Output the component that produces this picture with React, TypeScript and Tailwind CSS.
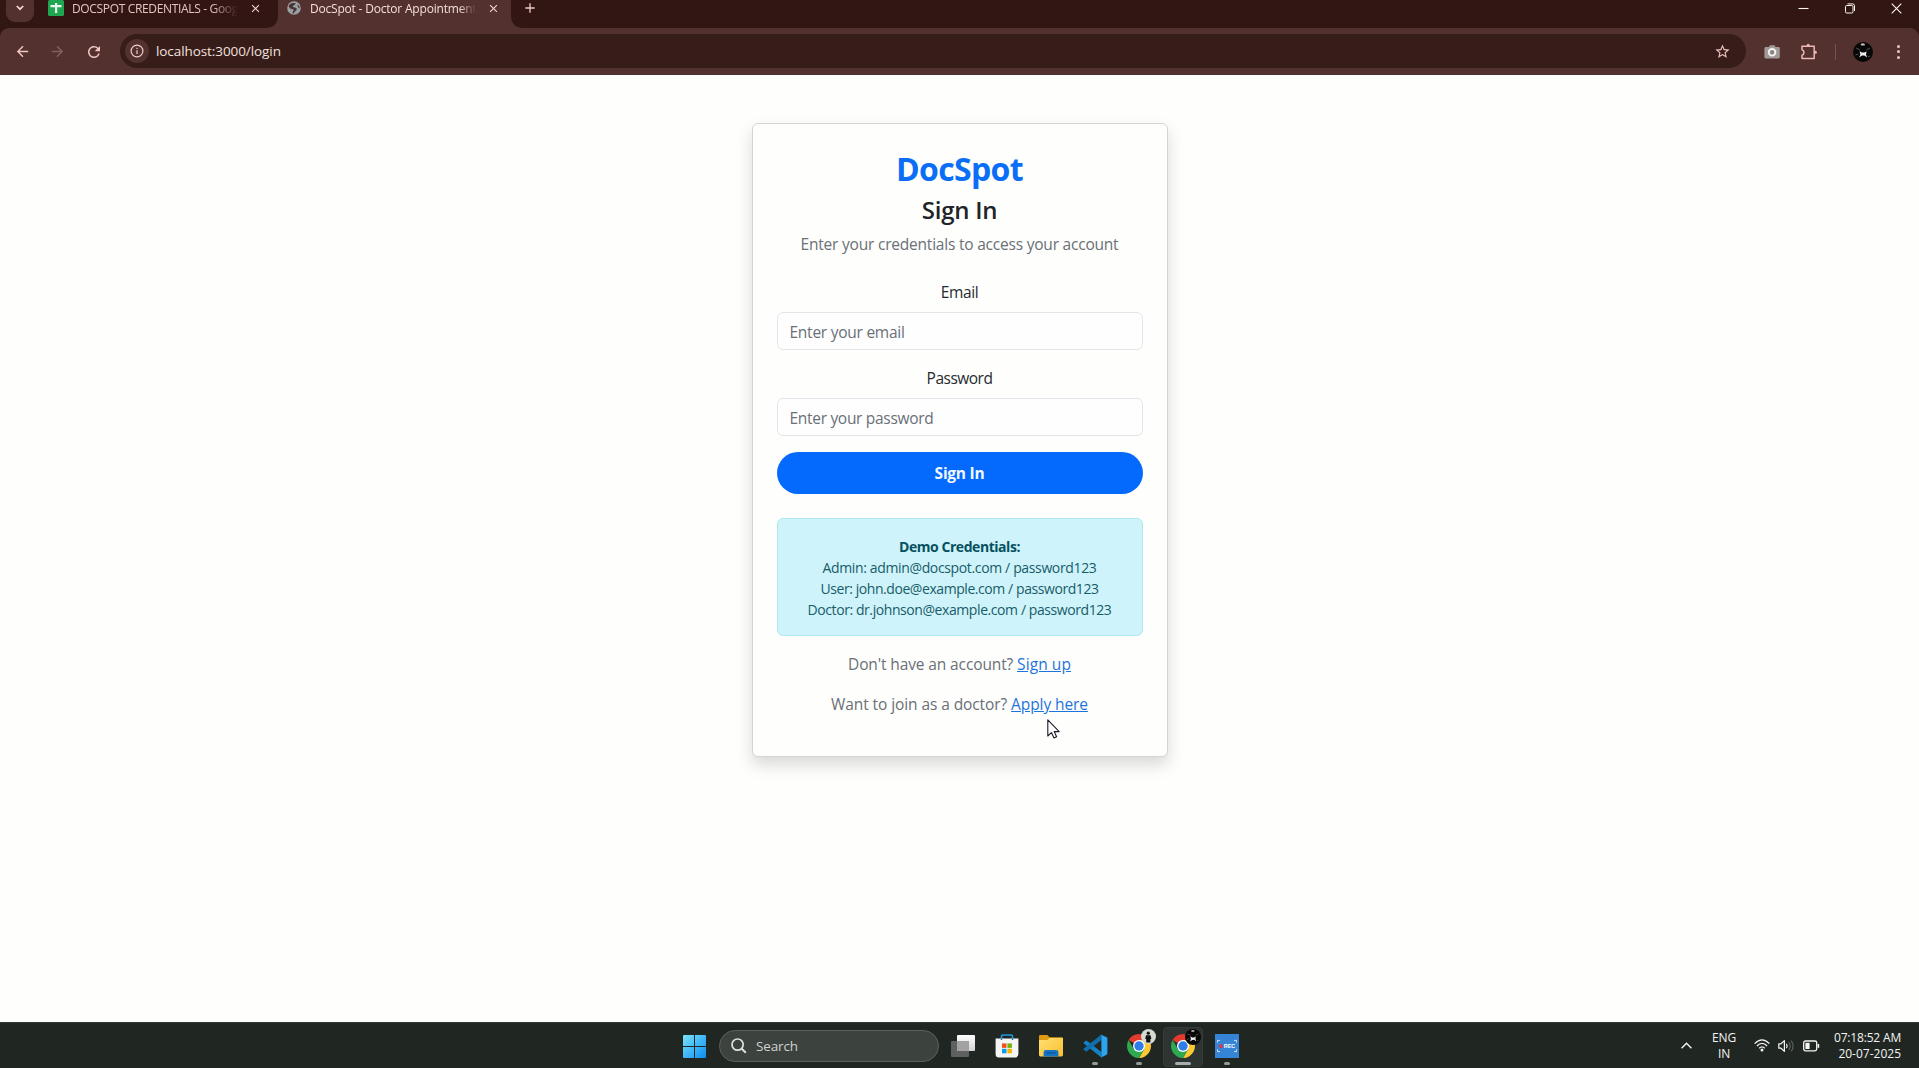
import React from "react";
import { MdArrowBack, MdArrowForward, MdRefresh, MdStarBorder, MdClose, MdAdd } from "react-icons/md";

function SheetsIcon() {
  return (
    <svg width="16" height="16" viewBox="0 0 16 16" className="block shrink-0">
      <rect width="16" height="16" rx="1.5" fill="#20a552" />
      <path d="M7 3h2.2v10H7z M2.5 5h11v2.2h-11z" fill="#e9f5ec" />
    </svg>
  );
}

function GlobeIcon() {
  return (
    <svg width="14" height="14" viewBox="0 0 14 14" className="block shrink-0">
      <circle cx="7" cy="7" r="6.8" fill="#9aa0a3" />
      <path d="M1.6 5.2C2 3.2 4.2 1.8 6.6 2L9.2 2.6L6.6 4.4L5.6 6L8.2 6.4L9.8 7.6L9.4 9.6L7.8 10.6L6.8 12.6L5.6 12.2L5.8 10.4L7 9L5 8L3 7.6z" fill="#4b3433" />
      <path d="M10.2 3.4L12.2 5.2L12.8 7.4L11.2 6.4z" fill="#4b3433" />
    </svg>
  );
}

function PuzzleIcon() {
  return (
    <svg width="18" height="18" viewBox="0 0 18 18" fill="none" stroke="#eab9b4" strokeWidth="1.5" strokeLinejoin="round" className="block">
      <path d="M2 3.2H14.2V15.6H2V12.2C4.6 11.6 4.6 7.4 2 6.8Z" />
      <circle cx="8.2" cy="2.3" r="1.5" fill="#eab9b4" stroke="none" />
      <circle cx="15.4" cy="9.3" r="1.5" fill="#eab9b4" stroke="none" />
    </svg>
  );
}

function CameraIcon() {
  return (
    <svg width="16" height="14" viewBox="0 0 16 14" className="block">
      <path d="M2 2h2.8L6 .2h4.4L11.6 2H14.6Q15.8 2 15.8 3.4V12Q15.8 13.4 14.6 13.4H1.6Q.4 13.4 .4 12V3.4Q.4 2 2 2z" fill="#a09a98" />
      <circle cx="8.1" cy="7.3" r="3.3" fill="#8b8584" stroke="#f7f5f4" strokeWidth="1.9" />
    </svg>
  );
}

function Avatar({ size }: { size: number }) {
  return (
    <svg width={size} height={size} viewBox="0 0 20 20" className="block">
      <circle cx="10" cy="10" r="10" fill="#070707" />
      <path d="M7.6 2.2Q9.6 .2 12 2.2L11.6 3.4H8.2z" fill="#c9b9b9" />
      <path d="M3 6l4 2 M17 6l-3.6 2 M2.5 13l3-1 M15 15l2-1" stroke="#474747" strokeWidth="1.2" />
      <path d="M6.6 9.2L8.8 10.6L11.4 10.6L13.6 9.4L13 12.2L14 15.4L11.4 13.4L9 13.6L6.2 15.6L7.4 12.4z" fill="#f0f0f0" />
    </svg>
  );
}

function ChromeLogo() {
  return (
    <svg width="24" height="24" viewBox="0 0 24 24" className="block">
      <path d="M12 12L1.61 6A12 12 0 0 1 22.39 6z" fill="#e33b2e" />
      <path d="M22.39 6A12 12 0 0 1 12 24L17.2 15L12 6z" fill="#fcc934" />
      <path d="M1.61 6A12 12 0 0 0 12 24L17.2 15L12 12L6.8 15z" fill="#2da94f" />
      <circle cx="12" cy="12" r="6" fill="#fff" />
      <circle cx="12" cy="12" r="4.7" fill="#2f7de9" />
    </svg>
  );
}

function StartLogo() {
  return (
    <svg width="23" height="23" viewBox="0 0 23 23" className="block">
      <defs>
        <linearGradient id="start" x1="0" y1="0" x2="23" y2="23" gradientUnits="userSpaceOnUse">
          <stop stopColor="#7be3fb" />
          <stop offset="1" stopColor="#0a8df2" />
        </linearGradient>
      </defs>
      <path d="M1 0H11V11H0V1Q0 0 1 0z M12 0H22Q23 0 23 1V11H12z M0 12H11V23H1Q0 23 0 22z M12 12H23V22Q23 23 22 23H12z" fill="url(#start)" />
    </svg>
  );
}

function TaskViewIcon() {
  return (
    <svg width="24" height="22" viewBox="0 0 24 22" className="block">
      <defs>
        <linearGradient id="tv" x1="0" y1="0" x2="0" y2="1">
          <stop stopColor="#ffffff" />
          <stop offset="1" stopColor="#d2d2d2" />
        </linearGradient>
      </defs>
      <rect x="6" y="0" width="18" height="16" rx="1" fill="url(#tv)" />
      <rect x="0" y="6" width="18" height="16" rx="1" fill="#5f6060" />
      <path d="M6 6h12v10H6z" fill="#a2a2a2" />
    </svg>
  );
}

function StoreIcon() {
  return (
    <svg width="24" height="24" viewBox="0 0 24 24" className="block">
      <path d="M6.5 6V2.2Q6.5 1 7.7 1H16.3Q17.5 1 17.5 2.2V6" fill="none" stroke="#1c9be0" strokeWidth="1.6" />
      <path d="M.6 4.6H23.4V20Q23.4 23.6 20 23.6H4Q.6 23.6 .6 20z" fill="#f5f5f5" />
      <path d="M6.5 4.6V6 M17.5 4.6V6" stroke="#136fa8" strokeWidth="1.4" />
      <path d="M7 9.4h4.5v4.5H7z" fill="#f25022" />
      <path d="M12.4 9.4h4.5v4.5h-4.5z" fill="#6fb50a" />
      <path d="M7 14.8h4.5v4.5H7z" fill="#0a9ce8" />
      <path d="M12.4 14.8h4.5v4.5h-4.5z" fill="#fbb500" />
    </svg>
  );
}

function FolderIcon() {
  return (
    <svg width="24" height="22" viewBox="0 0 24 22" className="block">
      <defs>
        <linearGradient id="fold" x1="0" y1="0" x2="1" y2="1">
          <stop stopColor="#ffdf74" />
          <stop offset="1" stopColor="#fbc02e" />
        </linearGradient>
      </defs>
      <path d="M0 1.2Q0 0 1.2 0H8.4L10.6 2.2H22.8Q24 2.2 24 3.4V12H0z" fill="#dd9a12" />
      <path d="M0 5H8.4L10.8 3H24V20Q24 21.4 22.6 21.4H1.4Q0 21.4 0 20z" fill="url(#fold)" />
      <path d="M4.6 21.6V17.2Q4.6 15 6.8 15H17.2Q19.4 15 19.4 17.2V21.6z" fill="#1674c4" />
      <path d="M7.4 18h9.2" stroke="#0d569c" strokeWidth="1.3" />
    </svg>
  );
}

function CodeIcon() {
  return (
    <svg width="25" height="24" viewBox="0 0 25 24" className="block">
      <path d="M.8 8.2L2.6 6.7Q3.2 6.3 3.8 6.8L18.4 18V23.4L.8 9.4Q.2 8.8 .8 8.2z" fill="#1580c2" />
      <path d="M.8 15.8L2.6 17.3Q3.2 17.7 3.8 17.2L18.4 6V.6L.8 14.6Q.2 15.2 .8 15.8z" fill="#0f6fae" />
      <path d="M17.6 .4L23.6 3.2Q24.4 3.6 24.4 4.6V19.4Q24.4 20.4 23.6 20.8L17.6 23.7Q18.4 23 18.4 22V2Q18.4 1 17.6 .4z" fill="#2ca5ee" />
    </svg>
  );
}

function RecIcon() {
  return (
    <svg width="24" height="24" viewBox="0 0 24 24" className="block">
      <rect width="24" height="24" fill="#3684d6" />
      <path d="M2.5 8.6V6.4H5 M19 6.4H21.5V8.6 M2.5 15.4V17.6H5 M19 17.6H21.5V15.4" fill="none" stroke="#cfe2f6" strokeWidth="1" />
      <circle cx="6" cy="12.2" r="2" fill="#dc3545" />
      <text x="8.8" y="14.2" fontFamily="Liberation Sans, sans-serif" fontWeight="700" fontSize="5.8" textLength="11.4" lengthAdjust="spacingAndGlyphs" fill="#ffffff">REC</text>
    </svg>
  );
}

function TabClose() {
  return <MdClose size={13} className="block shrink-0 text-[#f7d5d1]" />;
}

function TitleBar() {
  return (
    <div className="flex h-7 bg-[#321614]">
      <div className="ml-1.5 flex h-[22px] w-[28px] shrink-0 justify-center rounded-b-[9px] bg-[#52312e] pt-[5px]">
        <svg width="8" height="6" viewBox="0 0 8 6" fill="none" stroke="#f7d5d1" strokeWidth="1.7" className="block">
          <path d="M.8 1L4 4.2L7.2 1" />
        </svg>
      </div>
      <div className="ml-[14px] flex h-4 w-[217px] shrink-0 items-center">
        <SheetsIcon />
        <span className="ml-[8px] w-[166px] shrink-0 overflow-hidden whitespace-nowrap text-[12px] leading-[17px] tracking-[-0.34px] text-[#e3c3c0] [mask-image:linear-gradient(to_right,#000_84%,transparent)]">
          DOCSPOT CREDENTIALS - Goog
        </span>
        <span className="ml-[11px]"><TabClose /></span>
      </div>
      <svg width="14" height="28" viewBox="0 0 14 28" className="block shrink-0">
        <path d="M0 28Q13 28 13 15V0H14V28z" fill="#52312e" />
      </svg>
      <div className="flex h-7 w-[231px] shrink-0 items-start bg-[#52312e]">
        <div className="ml-[8px] flex h-4 items-center">
          <GlobeIcon />
          <span className="ml-[9px] w-[166px] shrink-0 overflow-hidden whitespace-nowrap text-[12px] leading-[17px] tracking-[-0.2px] text-[#f6dedb] [mask-image:linear-gradient(to_right,#000_90%,transparent)]">
            DocSpot - Doctor Appointment
          </span>
          <span className="ml-[11px]"><TabClose /></span>
        </div>
      </div>
      <svg width="14" height="28" viewBox="0 0 14 28" className="block shrink-0">
        <path d="M14 28Q1 28 1 15V0H0V28z" fill="#52312e" />
      </svg>
      <MdAdd size={16} className="ml-[-2px] block shrink-0 text-[#f0c8c4]" />
      <div className="ml-auto mr-[17px] flex h-4 items-center gap-[36px] text-[#fdf4f3]">
        <svg width="11" height="11" viewBox="0 0 11 11" className="block"><path d="M.5 5.5h10" stroke="currentColor" strokeWidth="1.1" /></svg>
        <svg width="10" height="11" viewBox="0 0 10 11" className="block" fill="none" stroke="currentColor" strokeWidth="1">
          <rect x=".5" y="2.5" width="7.5" height="7.5" rx="1.2" />
          <path d="M2.5 .9H7.6Q9.5 .9 9.5 2.8V8" />
        </svg>
        <svg width="11" height="11" viewBox="0 0 11 11" className="block"><path d="M.7 .7l9.6 9.6M10.3 .7L.7 10.3" stroke="currentColor" strokeWidth="1.1" /></svg>
      </div>
    </div>
  );
}

function AddressBar() {
  return (
    <div className="bg-[#321614]">
      <div className="flex h-[47px] items-center rounded-t-[9px] bg-[#52312e]">
        <MdArrowBack size={17} className="ml-[14px] block shrink-0 text-[#f2c6c1]" />
        <MdArrowForward size={17} className="ml-[18px] block shrink-0 text-[#85605d]" />
        <MdRefresh size={18} className="ml-[19px] block shrink-0 text-[#f2c6c1]" />
        <div className="mb-px ml-[17px] flex h-[34px] w-[1626px] shrink-0 items-center rounded-full bg-[#371d1a]">
          <div className="ml-[5px] flex h-[24px] w-[24px] shrink-0 items-center justify-center rounded-full bg-[#52312e]">
            <svg width="14" height="14" viewBox="0 0 14 14" className="block" fill="none" stroke="#f2cfcb" strokeWidth="1.2">
              <circle cx="7" cy="7" r="5.9" />
              <path d="M7 6.3V10M7 3.8V5.1" />
            </svg>
          </div>
          <span className="ml-[7px] text-[13.5px] leading-5 tracking-[-0.08px] text-[#f3e0de]">localhost:3000/login</span>
          <MdStarBorder size={17} className="ml-auto mr-[15px] block text-[#efc0bb]" />
        </div>
        <div className="ml-[18px]"><CameraIcon /></div>
        <div className="ml-[20px]"><PuzzleIcon /></div>
        <div className="ml-[17px] h-4 w-px bg-[#755350]" />
        <div className="ml-[17px]"><Avatar size={20} /></div>
        <div className="ml-[24px] flex flex-col gap-[2.5px]">
          <i className="block h-[3px] w-[3px] rounded-full bg-[#f0c3be]" />
          <i className="block h-[3px] w-[3px] rounded-full bg-[#f0c3be]" />
          <i className="block h-[3px] w-[3px] rounded-full bg-[#f0c3be]" />
        </div>
      </div>
    </div>
  );
}

function LoginCard() {
  return (
    <div className="relative mt-12 h-[634px] w-[416px] rounded-md border border-[#d4d4d4] bg-[#fefefc] px-6 pt-[24.6px] text-center shadow-[0_8px_16px_rgba(0,0,0,0.15)]">
      <h2 className="mb-2 text-[32px] font-bold leading-[39px] tracking-[-0.65px] text-[#0a6ef6]">DocSpot</h2>
      <h4 className="mb-2 text-[24px] font-semibold leading-[28.8px] tracking-[-0.24px] text-[#212529]">Sign In</h4>
      <p className="text-[15.5px] leading-6 tracking-[-0.21px] text-[#697077]">Enter your credentials to access your account</p>
      <form className="mt-6" onSubmit={(e) => e.preventDefault()}>
        <label htmlFor="email" className="mb-[7.5px] block text-[15.5px] leading-6 tracking-[-0.36px] text-[#262b30]">Email</label>
        <input id="email" type="email" placeholder="Enter your email" className="block h-[38px] w-full rounded-md border border-[#e3e6e9] bg-[#fefefe] px-3 pt-0.5 text-[15.5px] tracking-[-0.25px] outline-none placeholder:text-[#697077]" />
        <label htmlFor="password" className="mb-2 mt-4 block text-[15.5px] leading-6 tracking-[-0.5px] text-[#262b30]">Password</label>
        <input id="password" type="password" placeholder="Enter your password" className="block h-[38px] w-full rounded-md border border-[#e3e6e9] bg-[#fefefe] px-3 pt-0.5 text-[15.5px] tracking-[-0.3px] outline-none placeholder:text-[#697077]" />
        <button type="submit" className="mt-4 block h-[42px] w-full rounded-full bg-[#036afd] pt-px text-[15.5px] font-bold leading-6 tracking-[-0.25px] text-[#f1f7ff]">Sign In</button>
      </form>
      <div className="mt-6 h-[118.6px] rounded-md border border-[#b1e7ef] bg-[#cff3fa] pt-[17px] text-[14px] leading-[21px] text-[#175c69]">
        <p className="font-bold tracking-[-0.45px] text-[#055160]">Demo Credentials:</p>
        <p className="tracking-[-0.36px]">Admin: admin@docspot.com / password123</p>
        <p className="tracking-[-0.43px]">User: john.doe@example.com / password123</p>
        <p className="tracking-[-0.42px]">Doctor: dr.johnson@example.com / password123</p>
      </div>
      <p className="mt-4 text-[15.5px] leading-6 tracking-[-0.12px] text-[#697077]">
        Don't have an account? <a href="#" className="tracking-[0.08px] text-[#1f74db] underline">Sign up</a>
      </p>
      <p className="mt-4 text-[15.5px] leading-6 tracking-[-0.09px] text-[#697077]">
        Want to join as a doctor? <a href="#" className="text-[#1f74db] underline">Apply here</a>
      </p>
      <svg width="14" height="20" viewBox="0 0 14 20" className="absolute left-[294px] top-[595px]">
        <path d="M.8 .8V17L4.4 13.6L7 19L9.6 17.8L7.2 12.6H12.2z" fill="#fff" stroke="#1c1c28" strokeWidth="1.1" strokeLinejoin="round" />
      </svg>
    </div>
  );
}

function Task({ children, mark = "" }: { children: React.ReactNode; mark?: "" | "dot" | "active" }) {
  return (
    <div className="relative flex h-full w-11 shrink-0 items-center justify-center">
      {mark === "active" && <div className="absolute left-[2px] top-[4px] h-[40px] w-[40px] rounded-[4px] border border-[#353b38] bg-[#2e3431]" />}
      <div className="relative">{children}</div>
      {mark === "dot" && <div className="absolute bottom-[3px] left-[19px] h-[3px] w-[6px] rounded-full bg-[#969a98]" />}
      {mark === "active" && <div className="absolute bottom-[3px] left-[14px] h-[3px] w-[16px] rounded-full bg-[#a9adab]" />}
    </div>
  );
}

function Taskbar() {
  return (
    <div className="flex h-[46px] items-center border-t border-[#343936] bg-[#202622] text-[#f3f4f3]">
      <div className="ml-[683px] mt-[2px]"><StartLogo /></div>
      <div className="ml-[13px] flex h-8 w-[220px] shrink-0 items-center rounded-full border border-[#5a605c] bg-[#3c423e]">
        <svg width="16" height="16" viewBox="0 0 16 16" fill="none" stroke="#dfe2e0" strokeWidth="1.7" className="ml-[11px] block">
          <circle cx="6.6" cy="6.6" r="5.6" />
          <path d="M10.7 10.7L14.8 14.8" strokeWidth="2" />
        </svg>
        <span className="ml-[9px] text-[13.5px] leading-5 tracking-[-0.12px] text-[#cfd2d0]">Search</span>
      </div>
      <div className="ml-[2px] flex h-full">
        <Task><TaskViewIcon /></Task>
        <Task><StoreIcon /></Task>
        <Task><FolderIcon /></Task>
        <Task mark="dot"><CodeIcon /></Task>
        <Task mark="dot">
          <ChromeLogo />
          <svg width="15" height="15" viewBox="0 0 15 15" className="absolute left-[14px] top-[-5px]">
            <circle cx="7.5" cy="7.5" r="7.5" fill="#d5dbd3" />
            <circle cx="7.3" cy="4.2" r="1.6" fill="#111" />
            <path d="M5 6.2H9.6L10.4 10H9.4V13.4H5.2V10H4.2z" fill="#111" />
          </svg>
        </Task>
        <Task mark="active">
          <ChromeLogo />
          <div className="absolute left-[14px] top-[-5px]"><Avatar size={16} /></div>
        </Task>
        <Task mark="dot"><RecIcon /></Task>
      </div>
      <svg width="11" height="7" viewBox="0 0 11 7" fill="none" stroke="currentColor" strokeWidth="1.4" className="ml-auto block shrink-0">
        <path d="M.6 6.2L5.5 1.2L10.4 6.2" />
      </svg>
      <div className="ml-[20px] w-6 text-center text-[12px] leading-4 tracking-[-0.15px]">ENG<br />IN</div>
      <div className="ml-[18px] flex items-center gap-[8px]">
        <svg width="16" height="13" viewBox="0 0 16 13" fill="none" stroke="currentColor" strokeWidth="1.3" className="block">
          <path d="M.6 4.6Q8 -2.8 15.4 4.6M2.9 7Q8 1.9 13.1 7M5.2 9.3Q8 6.5 10.8 9.3" />
          <circle cx="8" cy="11" r="1.5" fill="currentColor" stroke="none" />
        </svg>
        <svg width="17" height="14" viewBox="0 0 17 14" fill="none" stroke="currentColor" strokeWidth="1.2" className="block">
          <path d="M.8 4.8H3L6.4 1.6V12.4L3 9.2H.8z" strokeLinejoin="round" />
          <path d="M8.4 4.8Q10 7 8.4 9.2" />
          <path d="M10.8 3.2Q13.6 7 10.8 10.8M13.2 1.6Q17 7 13.2 12.4" stroke="#5d625f" />
        </svg>
        <svg width="17" height="12" viewBox="0 0 17 12" fill="none" stroke="currentColor" strokeWidth="1.3" className="block">
          <rect x=".7" y="1" width="13" height="9.8" rx="1.8" />
          <path d="M2.4 2.8H6.6V9H2.4z" fill="currentColor" stroke="none" />
          <path d="M15.4 4V7.8" strokeWidth="1.6" />
        </svg>
      </div>
      <div className="ml-[15px] mr-[18px] w-[66px] whitespace-nowrap text-right text-[12px] leading-4">
        <div className="-ml-1 tracking-[-0.18px]">07:18:52 AM</div>
        <div>20-07-2025</div>
      </div>
    </div>
  );
}

export default function App() {
  return (
    <div className="flex h-[1068px] w-full flex-col overflow-hidden bg-[#fefefc] [font-family:'Open_Sans','Noto_Sans',sans-serif]">
      <TitleBar />
      <AddressBar />
      <main className="flex flex-1 items-start justify-center">
        <LoginCard />
      </main>
      <Taskbar />
    </div>
  );
}
